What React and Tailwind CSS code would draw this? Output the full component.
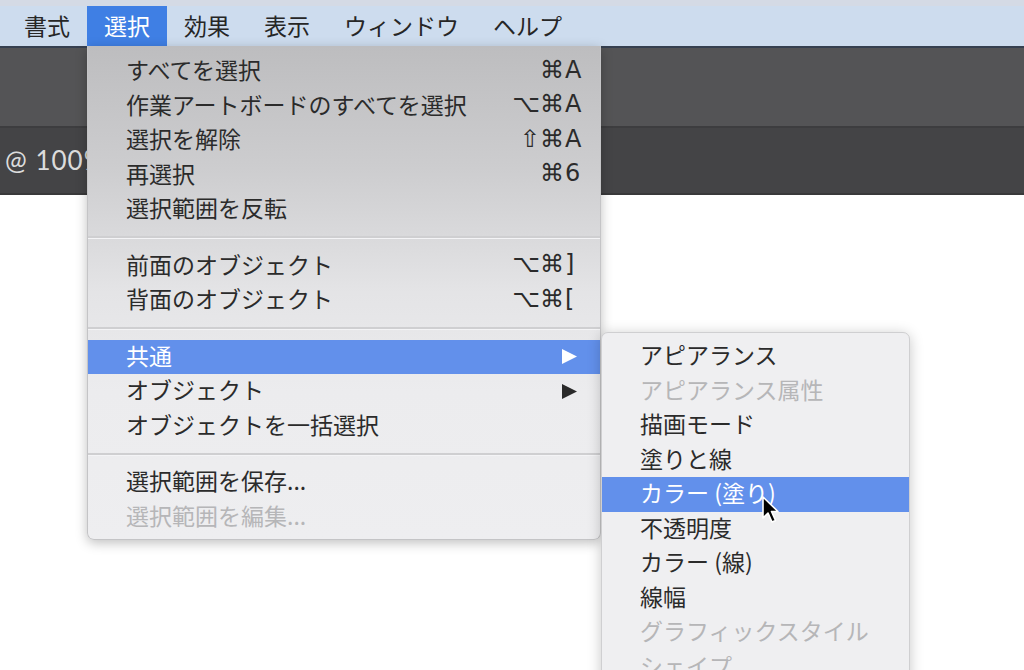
import React from "react";

const FONT = { fontFamily: '"Noto Sans CJK JP", "DejaVu Sans", sans-serif' };
const SYM = { fontFamily: '"DejaVu Sans", "Noto Sans CJK JP", sans-serif' };

function Tri({ white }) {
  return (
    <svg width="17" height="17" viewBox="0 0 17 17" className="block">
      <polygon points="1,1 16,8.5 1,16" fill={white ? "#ffffff" : "#2a2a2a"} />
    </svg>
  );
}

function Row({ label, mods, keyc, disabled, active, sub }) {
  return (
    <div
      className={
        "h-[34.5px] flex items-center pl-[38px] pr-[14px] pb-[3px] text-[23px] leading-none " +
        (active ? "bg-[#6290eb] text-white" : disabled ? "text-[#b6b6b8]" : "text-[#2b2b2b]")
      }
    >
      <span className="flex-1 whitespace-nowrap">{label}</span>
      {keyc !== undefined && (
        <span className="flex items-center text-[24px]" style={SYM}>
          <span className="text-right">{mods}</span>
          <span className="w-[22px] text-left pl-[1px]">{keyc}</span>
        </span>
      )}
      {sub && (
        <span className="mr-[8px] pt-[3px]">
          <Tri white={active} />
        </span>
      )}
    </div>
  );
}

function Sep() {
  return (
    <div className="h-[22px] flex flex-col justify-center">
      <div className="h-[2px] bg-[#cfcfd1]" />
      <div className="h-[1px] bg-[#f4f4f6]" />
    </div>
  );
}

function SubRow({ label, disabled, active }) {
  return (
    <div
      className={
        "h-[34.5px] flex items-center pl-[38px] pb-[3px] text-[23px] leading-none whitespace-nowrap " +
        (active ? "bg-[#6290eb] text-white" : disabled ? "text-[#b6b6b8]" : "text-[#2b2b2b]")
      }
    >
      {label}
    </div>
  );
}

export default function App() {
  const menubar = ["書式", "選択", "効果", "表示", "ウィンドウ", "ヘルプ"];
  return (
    <div className="w-[1024px] h-[670px] relative overflow-hidden bg-white flex flex-col" style={FONT}>
      <div className="h-[6px] bg-[#d4dae5]" />
      <div className="h-[40px] bg-[#cddcee] flex pl-[7px]">
        {menubar.map((m, i) => (
          <div
            key={m}
            className={
              "h-full flex items-center px-[17px] pb-[2px] text-[23px] leading-none " +
              (i === 1 ? "bg-[#3f7fe4] text-white" : "text-[#262626]")
            }
          >
            {m}
          </div>
        ))}
      </div>
      <div className="h-[2px] bg-[#364050]" />
      <div className="h-[78px] bg-[#545456]" />
      <div className="h-[2px] bg-[#3d3d3f]" />
      <div className="h-[65px] bg-[#444446] flex items-center pl-[5px]">
        <span
          className="text-[26px] tracking-[1px] text-[#dcdcdc] whitespace-nowrap"
          style={{ fontFamily: '"Lato", "Liberation Sans", sans-serif' }}
        >
          @ 100%
        </span>
      </div>
      <div className="h-[2px] bg-[#39393a]" />
      <div className="flex-1 bg-white" />

      {/* main menu */}
      <div
        className="absolute left-[87px] top-[46px] w-[514px] h-[494px] rounded-b-[7px] pt-[8px] shadow-[0_3px_12px_rgba(0,0,0,0.25)] border border-t-0 border-[#c4c4c6]"
        style={{ background: "linear-gradient(to bottom, #bdbdbf 0%, #cdcdcf 25%, #e4e4e6 50%, #ececee 70%, #eeeef0 100%)" }}
      >
        <Row label="すべてを選択" mods="⌘" keyc="A" />
        <Row label="作業アートボードのすべてを選択" mods="⌥⌘" keyc="A" />
        <Row label="選択を解除" mods="⇧⌘" keyc="A" />
        <Row label="再選択" mods="⌘" keyc="6" />
        <Row label="選択範囲を反転" />
        <Sep />
        <Row label="前面のオブジェクト" mods="⌥⌘" keyc="]" />
        <Row label="背面のオブジェクト" mods="⌥⌘" keyc="[" />
        <Sep />
        <Row label="共通" active sub />
        <Row label="オブジェクト" sub />
        <Row label="オブジェクトを一括選択" />
        <Sep />
        <Row label="選択範囲を保存..." />
        <Row label="選択範囲を編集..." disabled />
      </div>

      {/* submenu */}
      <div className="absolute left-[601px] top-[332px] w-[309px] h-[360px] rounded-t-[7px] pt-[6px] bg-[#efeff1] border border-[#cfcfd1] shadow-[0_2px_14px_rgba(0,0,0,0.22)]">
        <SubRow label="アピアランス" />
        <SubRow label="アピアランス属性" disabled />
        <SubRow label="描画モード" />
        <SubRow label="塗りと線" />
        <SubRow label="カラー (塗り)" active />
        <SubRow label="不透明度" />
        <SubRow label="カラー (線)" />
        <SubRow label="線幅" />
        <SubRow label="グラフィックスタイル" disabled />
        <SubRow label="シェイプ" disabled />
      </div>

      {/* cursor */}
      <svg className="absolute left-[761px] top-[495px]" width="22" height="30" viewBox="0 0 22 30">
        <path
          d="M2 2 L2 23 L7 18 L11 27 L14.5 25.5 L10.5 16.5 L17 16.5 Z"
          fill="#000"
          stroke="#fff"
          strokeWidth="1.6"
          strokeLinejoin="round"
        />
      </svg>
    </div>
  );
}
